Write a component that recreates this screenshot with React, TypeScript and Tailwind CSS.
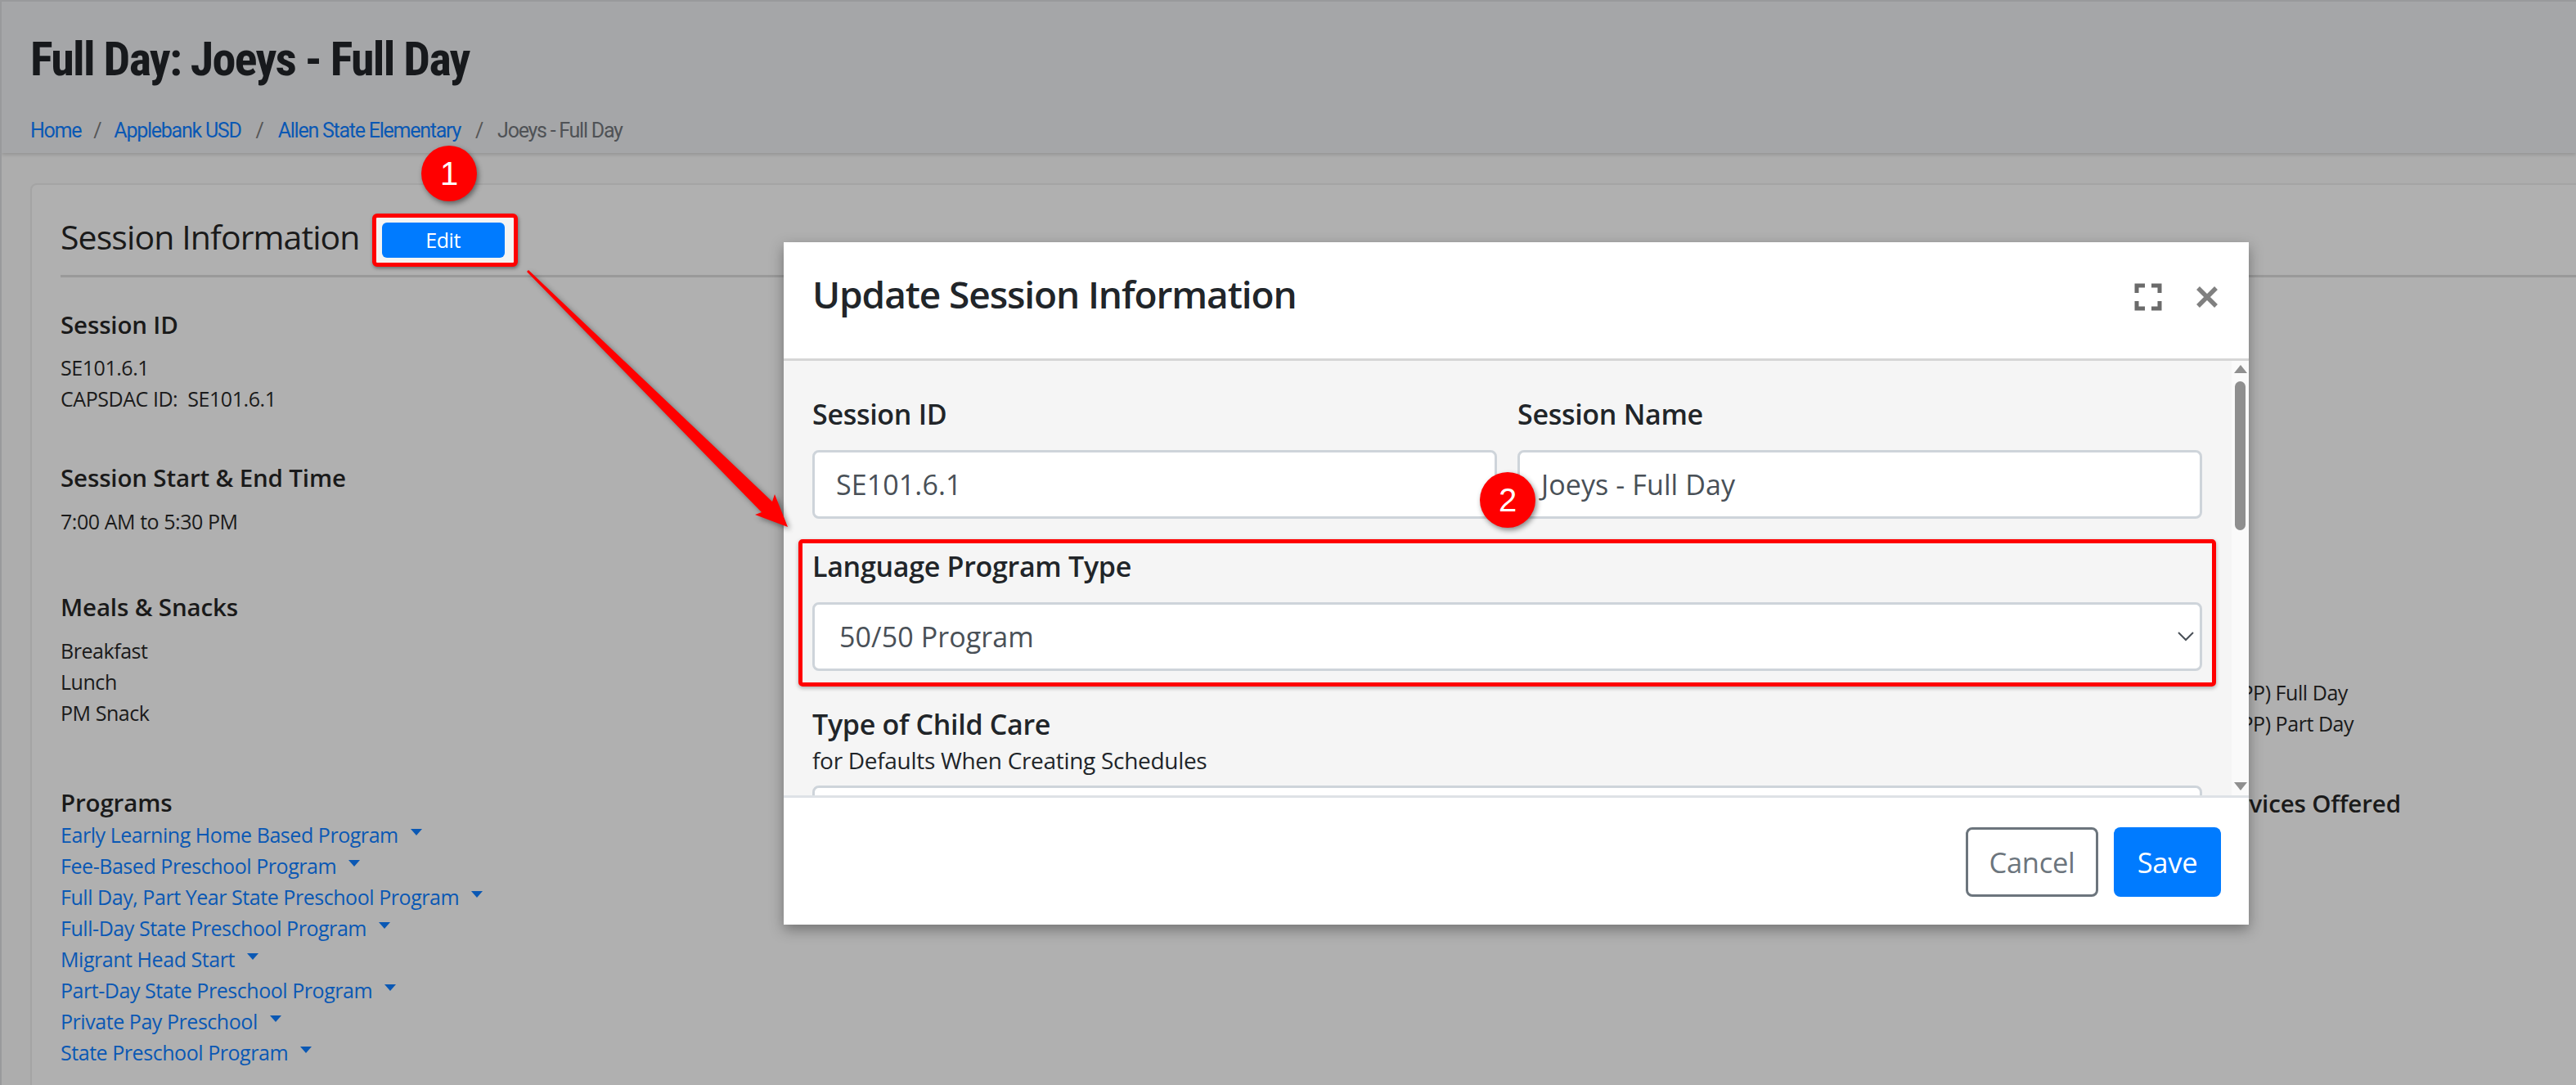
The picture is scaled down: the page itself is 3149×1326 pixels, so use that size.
const programs = [
  "Early Learning Home Based Program",
  "Fee-Based Preschool Program",
  "Full Day, Part Year State Preschool Program",
  "Full-Day State Preschool Program",
  "Migrant Head Start",
  "Part-Day State Preschool Program",
  "Private Pay Preschool",
  "State Preschool Program",
];

const Badge = ({ n, className }: { n: string; className: string }) => (
  <div
    className={`absolute flex h-[68px] w-[68px] items-center justify-center rounded-full bg-[#ff0000] font-['Liberation_Sans',sans-serif] text-[40px] text-white shadow-[2px_3px_6px_rgba(0,0,0,0.45)] ${className}`}
  >
    {n}
  </div>
);

const Arrow = () => (
  <svg
    className="absolute -top-[2px] -left-[2px] drop-shadow-[3px_3px_3px_rgba(0,0,0,0.4)]"
    width="1000"
    height="700"
    viewBox="0 0 1000 700"
  >
    <polygon points="644,332 646,330 944,613 947,604 963,644 923,629 931,626" fill="#ff0000" />
  </svg>
);

const Heading = ({ children, className }: { children: string; className?: string }) => (
  <div className={`text-[29.5px] leading-[40px] font-semibold tracking-[-0.15px] ${className ?? ""}`}>{children}</div>
);

const Label = ({ children }: { children: string }) => (
  <div className="pb-[4px] text-[34px] leading-[36px] font-semibold tracking-[-0.3px] text-[#212529]">{children}</div>
);

const Field = ({ value, className }: { value: string; className?: string }) => (
  <div
    className={`mt-[22px] flex h-[84px] items-center rounded-[8px] border-[3px] border-[#ced4da] bg-white px-[26px] text-[34px] tracking-[0.1px] text-[#495057] ${className ?? ""}`}
  >
    {value}
  </div>
);

const Modal = () => (
  <div className="absolute top-[294px] left-[956px] flex h-[834px] w-[1791px] flex-col bg-white shadow-[0_6px_16px_rgba(0,0,0,0.35)]">
    <div className="flex h-[145px] items-center justify-between border-b-[3px] border-[#d6d6d6] pr-[38px] pl-[35px]">
      <div className="pb-[16px] text-[46px] font-semibold tracking-[-1.1px] text-[#212529]">Update Session Information</div>
      <div className="flex items-center gap-[42px] pb-[8px]">
        <svg width="34" height="34" viewBox="0 0 34 34" fill="none" stroke="#6b6b6b" strokeWidth="5">
          <path d="M3 12V3h10M21 3h10v9M31 22v9H21M13 31H3v-9" />
        </svg>
        <svg width="26" height="26" viewBox="0 0 26 26" fill="none" stroke="#808080" strokeWidth="5.5">
          <path d="M2 2l22 22M24 2L2 24" />
        </svg>
      </div>
    </div>
    <div className="relative h-[531px] overflow-hidden bg-[#f5f5f5] pt-[47px] pr-[57px] pl-[35px]">
      <div className="grid grid-cols-2 gap-x-[25px]">
        <div>
          <Label>Session ID</Label>
          <Field value="SE101.6.1" />
        </div>
        <div>
          <Label>Session Name</Label>
          <Field value="Joeys - Full Day" />
        </div>
      </div>
      <div className="-mx-[17px] mt-[25px] h-[180px] rounded-[5px] border-[5px] border-[#ff0000] px-[12px] pt-[10px] shadow-[0_2px_5px_rgba(0,0,0,0.3)]">
        <Label>Language Program Type</Label>
        <div className="relative">
          <Field value="50/50 Program" className="mt-[21px] pl-[30px]" />
          <svg className="absolute top-[36px] right-[10px]" width="20" height="12" viewBox="0 0 20 12" fill="none" stroke="#495057" strokeWidth="2">
            <path d="M1 1l9 9 9-9" />
          </svg>
        </div>
      </div>
      <div className="mt-[28px]">
        <Label>Type of Child Care</Label>
        <div className="mt-[3px] text-[28px] leading-[38px] tracking-[-0.3px] text-[#212529]">for Defaults When Creating Schedules</div>
        <div className="mt-[12px] h-[84px] rounded-[8px] border-[3px] border-[#ced4da] bg-white" />
      </div>
      <div className="absolute top-0 right-0 bottom-0 flex w-[21px] flex-col items-center bg-[#fafafa] pt-[5px]">
        <div className="h-0 w-0 border-x-[8px] border-b-[10px] border-x-transparent border-b-[#8f8f8f]" />
        <div className="mt-[10px] h-[182px] w-[13px] rounded-full bg-[#8f8f8f]" />
        <div className="mt-auto mb-[6px] h-0 w-0 border-x-[8px] border-t-[10px] border-x-transparent border-t-[#8f8f8f]" />
      </div>
    </div>
    <div className="flex flex-1 items-start justify-end gap-[19px] border-t-[3px] border-[#dee2e6] pt-[36px] pr-[34px]">
      <div className="flex h-[85px] w-[162px] items-center justify-center rounded-[8px] border-[3px] border-[#6c757d] text-[34.5px] tracking-[-0.3px] text-[#6c757d]">Cancel</div>
      <div className="flex h-[85px] w-[131px] items-center justify-center rounded-[8px] bg-[#007bff] text-[34.5px] tracking-[-0.3px] text-white">Save</div>
    </div>
  </div>
);

export default function App() {
  return (
    <div className="relative h-[1326px] w-[3149px] overflow-hidden border-t-2 border-l-2 border-[#999a9c] bg-[#adadad] font-['Open_Sans',sans-serif] text-[25px] tracking-[-0.45px] text-[#1a1a1a]">
      <div className="h-[185px] bg-[#a5a6a8] pt-[34px] pl-[35px] shadow-[0_2px_4px_rgba(0,0,0,0.15)]">
        <div className="font-['Roboto',sans-serif] text-[58px] leading-[72px] font-bold tracking-[-1.7px] text-[#17191c] [font-stretch:condensed]">
          Full Day: Joeys - Full Day
        </div>
        <div className="mt-[34px] flex items-center font-['Roboto',sans-serif] text-[25px] leading-[36px] tracking-[-1.25px] text-[#0a58b4]">
          <span>Home</span>
          <span className="mr-[16px] ml-[15px] text-[#555]">/</span>
          <span>Applebank USD</span>
          <span className="mx-[18px] text-[#555]">/</span>
          <span>Allen State Elementary</span>
          <span className="mx-[18px] text-[#555]">/</span>
          <span className="text-[#4f5256]">Joeys - Full Day</span>
        </div>
      </div>

      <div className="pt-[37px] pl-[35px]">
        <div className="-mr-[20px] h-[1200px] rounded-[8px] border-2 border-[#a4a4a4] bg-[#b0b0b0] pt-[32px] pl-[35px]">
          <div className="flex h-[81px] items-start border-b-[3px] border-[#999999]">
            <div className="pt-[6px] text-[41px] leading-[50px] tracking-[-0.9px]">Session Information</div>
            <div className="mt-[3px] ml-[15px] flex h-[65px] w-[178px] items-center rounded-[6px] border-[5px] border-[#ff0000] bg-[#f4f4f4] pl-[7px] shadow-[1px_2px_4px_rgba(0,0,0,0.4)]">
              <div className="flex h-[43px] w-[150px] items-center justify-center rounded-[6px] bg-[#007bff] text-white">Edit</div>
            </div>
          </div>

          <div className="flex">
            <div className="flex-1">
              <Heading className="mt-[38px]">Session ID</Heading>
              <div className="mt-[13px] leading-[38px]">
                <div>SE101.6.1</div>
                <div>CAPSDAC ID:&nbsp; SE101.6.1</div>
              </div>
              <Heading className="mt-[58px]">Session Start &amp; End Time</Heading>
              <div className="mt-[14px] leading-[38px]">7:00 AM to 5:30 PM</div>
              <Heading className="mt-[66px]">Meals &amp; Snacks</Heading>
              <div className="mt-[14px] leading-[38px]">
                <div>Breakfast</div>
                <div>Lunch</div>
                <div>PM Snack</div>
              </div>
              <Heading className="mt-[71px]">Programs</Heading>
              <div className="leading-[38px] text-[#0a58b4]">
                {programs.map((p) => (
                  <div key={p} className="flex items-center">
                    {p}
                    <span className="mb-[6px] ml-[15px] h-0 w-0 border-x-[7px] border-t-[8px] border-x-transparent border-t-[#0a58b4]" />
                  </div>
                ))}
              </div>
            </div>
            <div className="mr-[163px] w-[300px]">
              <div className="mt-[488px] leading-[38px]">
                <div>(CSPP) Full Day</div>
                <div>(CSPP) Part Day</div>
              </div>
              <Heading className="mt-[59px]">Services Offered</Heading>
            </div>
          </div>
        </div>
      </div>

      <Modal />
      <Arrow />
      <Badge n="1" className="top-[176px] left-[513px]" />
      <Badge n="2" className="top-[575px] left-[1807px]" />
    </div>
  );
}
